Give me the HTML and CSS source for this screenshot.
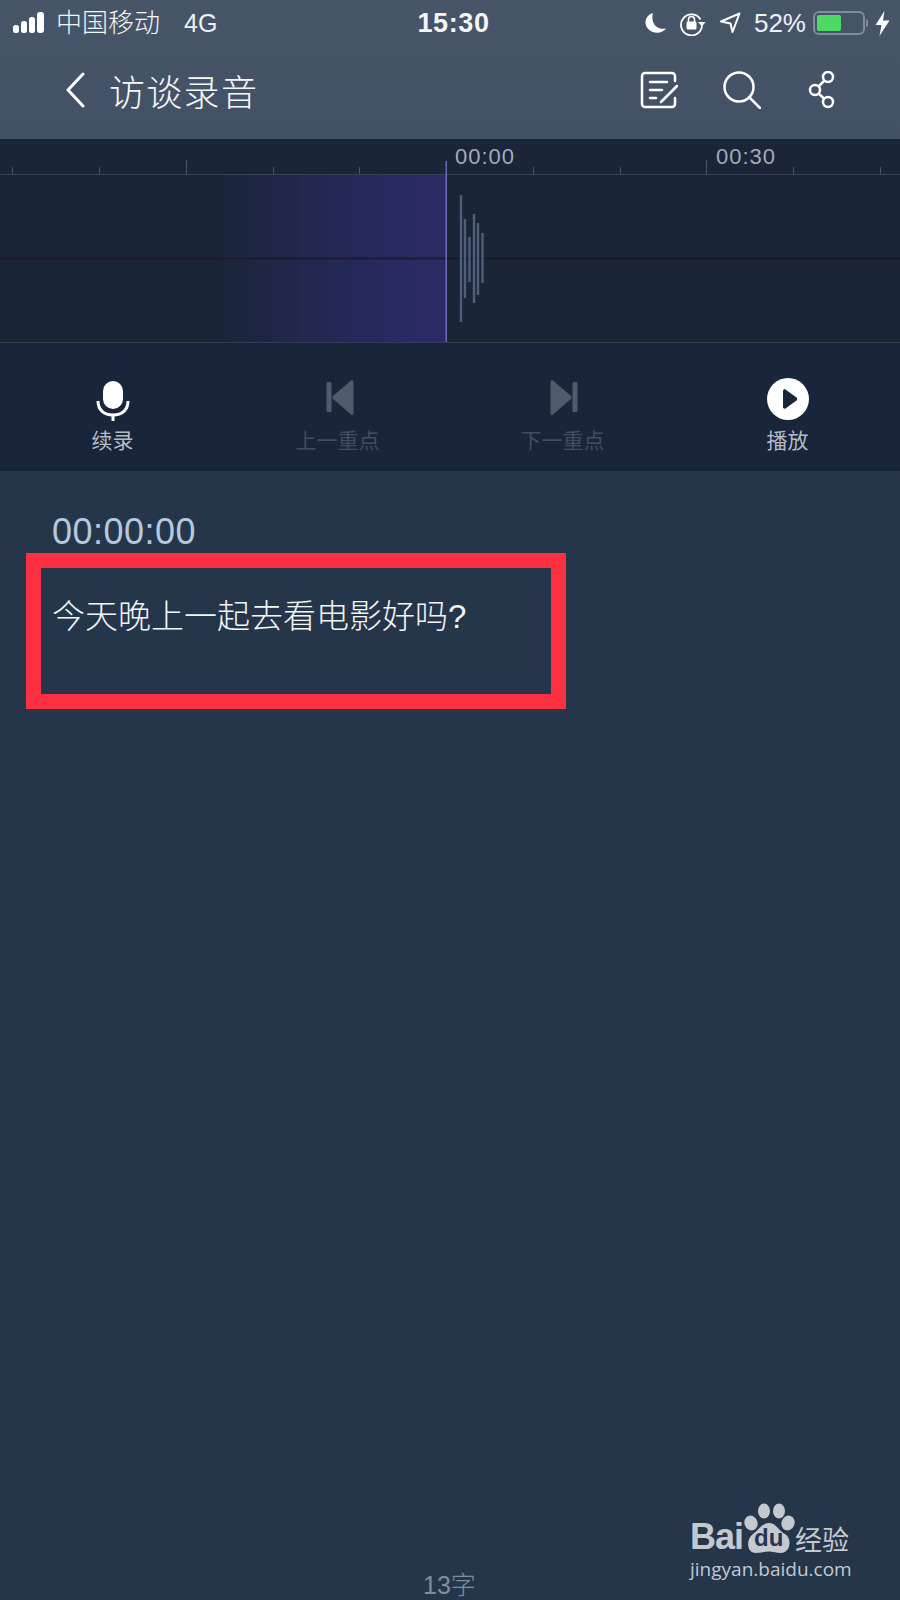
FILE: index.html
```html
<!DOCTYPE html>
<html lang="zh-CN">
<head>
<meta charset="utf-8">
<title>访谈录音</title>
<link rel="stylesheet" href="styles.css">
</head>
<body>
<div class="page">
  <header class="header">
    <div class="status">
      <div class="status-left">
        <svg class="signal" width="36" height="22" viewBox="0 0 36 22" fill="#fff"><rect x="0" y="13" width="6" height="8" rx="2.5"/><rect x="8" y="9" width="6" height="12" rx="2.5"/><rect x="16" y="5" width="6" height="16" rx="2.5"/><rect x="24" y="0" width="7" height="21" rx="3"/></svg>
        <span class="carrier">中国移动</span>
        <span class="net">4G</span>
      </div>
      <div class="clock">15:30</div>
      <div class="status-right">
        <svg class="moon" width="22" height="22" viewBox="0 0 22 22"><path d="M8 1C3 2.500 0 6.500 0.500 11.500C1.500 17.500 8 22 14.500 20.500C17 19.900 19.500 18.500 21 16.500C15.500 17.500 10.500 15.500 8.500 11C7 7.500 7 4 8 1Z" fill="#fff"/></svg>
        <svg class="rotlock" width="27" height="26" viewBox="0 0 27 26" fill="none" stroke="#fff"><path d="M21.500 9.500A10.500 10.500 0 1 0 23 15.500" stroke-width="1.800"/><path d="M19 12H26.500L23 16.500Z" fill="#fff" stroke="none"/><rect x="7.500" y="11.500" width="10" height="8" rx="1.500" fill="#fff" stroke="none"/><path d="M9.500 12V9.500a3 3 0 0 1 6 0V12" stroke-width="1.600"/></svg>
        <svg class="locate" width="22" height="22" viewBox="0 0 22 22" fill="none" stroke="#fff" stroke-width="2" stroke-linejoin="round"><path d="M2 9.500L20.500 1.500L13.500 20L11.500 11.500Z"/></svg>
        <span class="pct">52%</span>
        <div class="battery"><div class="battery-fill"></div></div>
        <div class="battery-nub"></div>
        <svg class="bolt" width="15" height="25" viewBox="0 0 15 25"><path d="M9.500 0L0.500 14H6.500L4.500 25L14.500 9.500H8Z" fill="#fff"/></svg>
      </div>
    </div>
    <nav class="nav">
      <div class="nav-left">
        <svg class="back" width="20" height="36" viewBox="0 0 20 36" fill="none" stroke="#fff" stroke-width="3" stroke-linecap="round" stroke-linejoin="round"><path d="M18 2L3 18L18 34"/></svg>
        <h1 class="title">访谈录音</h1>
      </div>
      <div class="nav-right">
        <svg class="ico-note" width="38" height="38" viewBox="0 0 38 38" fill="none" stroke="#fff" stroke-width="2.500" stroke-linecap="round"><path d="M35 10V5a3 3 0 0 0-3-3H5a3 3 0 0 0-3 3V33a3 3 0 0 0 3 3H32a3 3 0 0 0 3-3V27"/><path d="M10 11H27M10 19H22M10 27H16M21 31L37 15"/></svg>
        <svg class="ico-search" width="38" height="38" viewBox="0 0 38 38" fill="none" stroke="#fff" stroke-width="2.500" stroke-linecap="round"><circle cx="16" cy="16" r="14.500"/><path d="M26.500 26.500L37 37"/></svg>
        <svg class="ico-share" width="28" height="38" viewBox="0 0 28 38" fill="none" stroke="#fff" stroke-width="2.500"><circle cx="20" cy="6" r="5"/><circle cx="7" cy="19" r="5"/><circle cx="20" cy="31" r="5"/><path d="M16.500 9.500L10.500 15.500M10.500 22.500L16.500 28"/></svg>
      </div>
    </nav>
  </header>

  <section class="track">
    <svg class="track-art" width="900" height="204" viewBox="0 0 900 204">
      <defs>
        <linearGradient id="fade" x1="0" x2="1" y1="0" y2="0">
          <stop offset="0" stop-color="#2a2a66" stop-opacity="0"/>
          <stop offset="0.4" stop-color="#2a2a66" stop-opacity="0.5"/>
          <stop offset="0.8" stop-color="#2a2a66" stop-opacity="0.92"/>
          <stop offset="1" stop-color="#2c2a66"/>
        </linearGradient>
      </defs>
      <rect x="215" y="35" width="231" height="168" fill="url(#fade)"/>
      <rect x="0" y="118.500" width="446" height="2" fill="#1d1a2e"/>
      <rect x="446" y="118.500" width="454" height="2" fill="#15161f"/>
      <rect x="0" y="35" width="900" height="1" fill="#364259"/>
      <rect x="0" y="203" width="900" height="1" fill="#303c55"/>
      <g stroke="#48546a" stroke-width="1">
        <path d="M12.500 28V35M99.500 28V35M186.500 21V35M273.500 28V35M359.500 28V35M533.500 28V35M620.500 28V35M706.500 21V35M793.500 28V35M880.500 28V35"/>
      </g>
      <rect x="445.500" y="22" width="1.500" height="181" fill="#6a68b8"/>
      <g stroke="#4f5e79" stroke-width="2.400">
        <path d="M461 56V183M465 80V159M469.500 98V143M474 75V164M478 84V156M482.500 94V144"/>
      </g>
    </svg>
    <span class="tick-label tick-a">00:00</span>
    <span class="tick-label tick-b">00:30</span>
  </section>

  <section class="controls">
    <div class="ctrl">
      <svg width="34" height="44" viewBox="0 0 34 44"><rect x="7" y="3" width="20" height="28" rx="10" fill="#fff"/><path d="M2 23C2 32 8 37 17 37C26 37 32 32 32 23" fill="none" stroke="#fff" stroke-width="3"/><rect x="15.500" y="37" width="3" height="6" fill="#fff"/></svg>
      <span class="ctrl-label">续录</span>
    </div>
    <div class="ctrl ctrl-off">
      <svg width="34" height="44" viewBox="0 0 34 44"><g transform="translate(1)"><rect x="4.500" y="4" width="5" height="30" rx="1.500" fill="#505c6e"/><path d="M29 2.500C30.500 2 31.500 3 31.500 4.500V35C31.500 37 30.500 37.500 29 36.500L10.500 20.500C10 20 10 19 10.500 18.500Z" fill="#505c6e"/></g></svg>
      <span class="ctrl-label">上一重点</span>
    </div>
    <div class="ctrl ctrl-off">
      <svg width="34" height="44" viewBox="0 0 34 44"><g transform="translate(2)"><rect x="24.500" y="4" width="5" height="30" rx="1.500" fill="#505c6e"/><path d="M5 2.500C3.500 2 2.500 3 2.500 4.500V35C2.500 37 3.500 37.500 5 36.500L23.500 20.500C24 20 24 19 23.500 18.500Z" fill="#505c6e"/></g></svg>
      <span class="ctrl-label">下一重点</span>
    </div>
    <div class="ctrl">
      <svg width="44" height="44" viewBox="0 0 44 44"><circle cx="22" cy="21" r="21" fill="#fff"/><path d="M17 13C17 11.500 18.500 11 19.500 11.500L30.500 19.500C31.500 20.300 31.500 21.700 30.500 22.500L19.500 30.500C18.500 31 17 30.500 17 29Z" fill="#18253a"/></svg>
      <span class="ctrl-label">播放</span>
    </div>
  </section>

  <main class="content">
    <div class="stamp">00:00:00</div>
    <div class="mark">
      <p class="sentence">今天晚上一起去看电影好吗?</p>
    </div>
    <div class="count">13字</div>
  </main>

  <aside class="watermark">
    <div class="wm-top">
      <span class="wm-bai">Bai</span>
      <div class="wm-paw">
        <svg width="52" height="52" viewBox="0 0 52 52" fill="#c4c9d0"><ellipse cx="21" cy="8" rx="6" ry="7.500"/><ellipse cx="36" cy="8" rx="6" ry="7.500"/><ellipse cx="8" cy="20" rx="6.500" ry="7.500" transform="rotate(-20 8 20)"/><ellipse cx="45" cy="20" rx="6.500" ry="7.500" transform="rotate(20 45 20)"/><path d="M26 20C33 20 36 28 42 31C49 35 48 50 38 50C33 50 30 48.500 26 48.500C22 48.500 18 50 13 50C3 50 3 36 10 31C16 27 19 20 26 20Z"/></svg>
        <span class="wm-du">du</span>
      </div>
      <span class="wm-cn">经验</span>
    </div>
    <div class="wm-url">jingyan.baidu.com</div>
  </aside>
</div>
</body>
</html>
```
FILE: styles.css
```css
* { box-sizing: border-box; }
html, body { margin: 0; padding: 0; }
body {
  width: 900px;
  height: 1600px;
  overflow: hidden;
  font-family: "Liberation Sans", "Noto Sans CJK SC", sans-serif;
  color: #fff;
}
.page {
  position: relative;
  width: 900px;
  height: 1600px;
  display: flex;
  flex-direction: column;
  background: #26364a;
  overflow: hidden;
}
.header {
  height: 139px;
  background: linear-gradient(#475569, #435166);
  display: flex;
  flex-direction: column;
}
.status {
  height: 46px;
  display: grid;
  grid-template-columns: 1fr auto 1fr;
  align-items: center;
  padding: 0 10px 0 13px;
}
.status-left, .status-right { display: flex; align-items: center; }
.status-right { justify-content: flex-end; }
.carrier { margin-left: 7px; font-size: 26px; font-weight: 300; line-height: 30px; color: #f2f4f6; }
.net { margin-left: 24px; font-size: 25px; line-height: 30px; color: #eef0f3; }
.clock { margin-left: 4px; font-size: 27px; font-weight: 700; letter-spacing: .6px; color: #f4f5f7; }
.rotlock { margin-left: 12px; }
.locate { margin-left: 13px; }
.pct { margin-left: 13px; font-size: 26px; color: #eef0f3; }
.battery {
  width: 52px;
  height: 24px;
  margin-left: 7px;
  border: 2px solid #818b9b;
  border-radius: 6px;
  padding: 2px;
}
.battery-fill { width: 24px; height: 100%; background: #4cd964; border-radius: 2px; }
.battery-nub { width: 2px; height: 8px; margin-left: 1px; background: #818b9b; border-radius: 0 2px 2px 0; }
.bolt { margin-left: 7px; }
.nav {
  flex: 1;
  display: flex;
  align-items: center;
  justify-content: space-between;
  padding: 0 64px 5px 65px;
}
.nav-left { display: flex; align-items: center; }
.title { margin: 0 0 0 24px; font-size: 36px; font-weight: 300; color: #f6f7f9; letter-spacing: 1.3px; }
.nav-right { display: flex; align-items: center; gap: 45px; }
.ico-share { margin-left: 2px; }
.track {
  position: relative;
  height: 204px;
  background: #1a2538;
}
.track-art { display: block; }
.tick-label {
  position: absolute;
  top: 5px;
  font-size: 22px;
  line-height: 26px;
  letter-spacing: 1px;
  color: #a2abba;
}
.tick-a { left: 455px; }
.tick-b { left: 716px; }
.controls {
  height: 128px;
  background: #18253a;
  display: grid;
  grid-template-columns: repeat(4, 1fr);
  padding-top: 35px;
}
.ctrl { display: flex; flex-direction: column; align-items: center; }
.ctrl-label { margin-top: 4px; font-size: 21px; line-height: 30px; color: #b4bbc6; }
.ctrl-off .ctrl-label { color: #414d60; }
.content {
  flex: 1;
  display: flex;
  flex-direction: column;
  padding: 41px 0 0 26px;
}
.stamp { padding-left: 26px; padding-bottom: 1px; font-size: 36px; line-height: 40px; letter-spacing: .5px; color: #b5c8dd; }
.mark {
  width: 540px;
  height: 156px;
  border: 15px solid #fb3040;
  padding: 27px 0 0 11px;
}
.sentence { margin: 0; font-size: 33px; font-weight: 300; line-height: 44px; color: #f3f5f7; }
.count {
  margin-top: auto;
  margin-left: 397px;
  font-size: 25px;
  font-weight: 300;
  line-height: 30px;
  color: #7f8da0;
}
.watermark {
  position: absolute;
  left: 690px;
  top: 1503px;
  width: 165px;
  color: #c4c9d0;
}
.wm-top { display: flex; align-items: flex-end; height: 52px; }
.wm-bai { font-size: 36px; line-height: 36px; font-weight: 700; letter-spacing: -1px; }
.wm-paw { position: relative; width: 52px; height: 52px; }
.wm-paw svg { display: block; }
.wm-du {
  position: absolute;
  left: 11px;
  top: 22px;
  font-size: 24px;
  line-height: 26px;
  font-weight: 700;
  color: #26364a;
}
.wm-cn { font-size: 27px; line-height: 28px; font-weight: 400; }
.wm-url { margin-top: 2px; font-size: 19px; line-height: 24px; letter-spacing: 0; font-family: "Open Sans", "Liberation Sans", sans-serif; }
```
